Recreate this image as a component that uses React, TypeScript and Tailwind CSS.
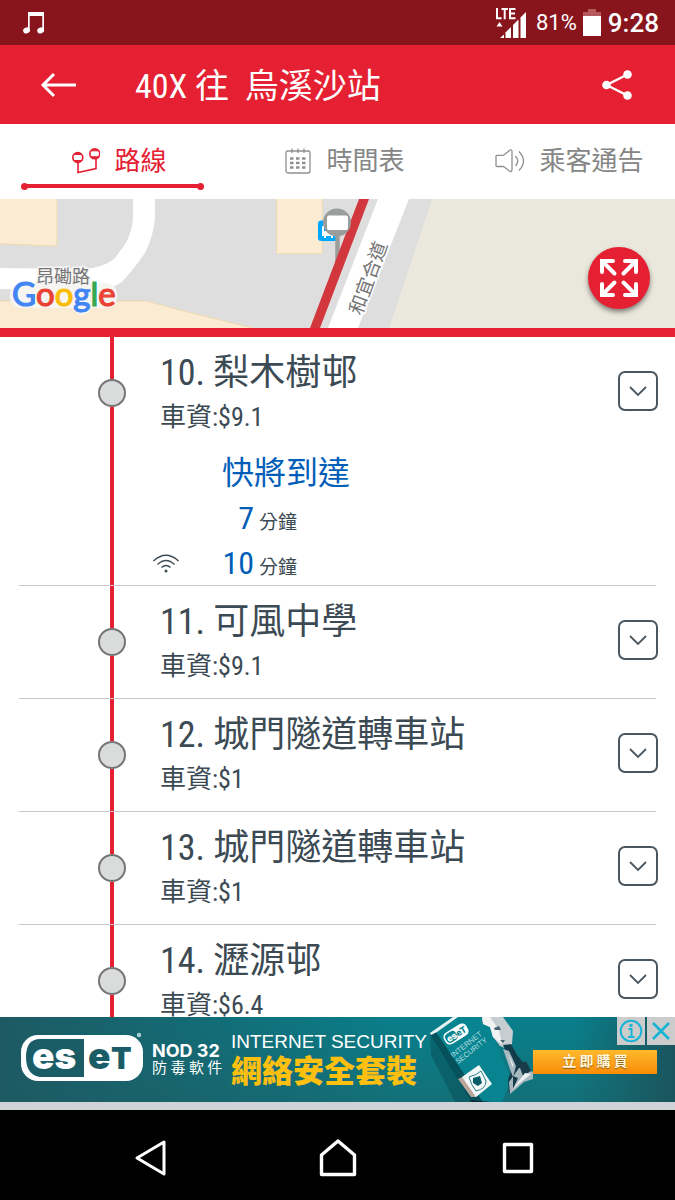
import React from "react";

type Arrival = { value: string; unit?: string; live?: boolean };
type Stop = { no: number; name: string; fare: string; arrivals?: Arrival[] };

const stops: Stop[] = [
  {
    no: 10,
    name: "梨木樹邨",
    fare: "$9.1",
    arrivals: [
      { value: "快將到達" },
      { value: "7", unit: "分鐘" },
      { value: "10", unit: "分鐘", live: true },
    ],
  },
  { no: 11, name: "可風中學", fare: "$9.1" },
  { no: 12, name: "城門隧道轉車站", fare: "$1" },
  { no: 13, name: "城門隧道轉車站", fare: "$1" },
  { no: 14, name: "瀝源邨", fare: "$6.4" },
];

function StatusBar() {
  return (
    <div className="flex h-[45px] shrink-0 items-center justify-between bg-[#88141c] pr-4 pl-[22px] font-['Roboto',sans-serif] text-white">
      <svg width="24" height="24" viewBox="0 0 24 24" aria-hidden="true" fill="#fff">
        <path d="M6 1.500Q6 1 6.500 1H21.500Q22 1 22 1.500V19H20.300V5H7.700V19H6Z" />
        <ellipse cx="4.600" cy="19.400" rx="3.500" ry="2.900" transform="rotate(-25 4.600 19.400)" />
        <ellipse cx="18.700" cy="19.400" rx="3.500" ry="2.900" transform="rotate(-25 18.700 19.400)" />
      </svg>
      <div className="flex items-center">
        <svg width="32" height="32" viewBox="0 0 32 32" className="mr-[9px]" aria-label="LTE">
          <g fill="none" stroke="#fff" strokeWidth="2">
            <path d="M2 1V11.200H6.500M6.500 2H13M9.700 2V12.200M20.500 2H15V11.200H20.500M15 6.500H20" />
          </g>
          <g fill="#fff">
            <path d="M4.500 15L7.500 19.500H1.500Z" />
            <path d="M5 31L9 27.500V31Z" />
            <path d="M10.500 31V25.500L16 20V31Z" />
            <path d="M18 31V18L23.500 12.500V31Z" />
            <path d="M25.500 31V10.500L31 5V31Z" />
          </g>
        </svg>
        <span className="mr-[6px] text-[22px] leading-[28px]">81%</span>
        <svg width="18" height="28" viewBox="0 0 18 28" className="mr-[7px]" aria-hidden="true">
          <path d="M5 0H13V3H18V8H0V3H5Z" fill="#b65a60" />
          <path d="M0 7H18V27H0Z" fill="#fff" />
        </svg>
        <span className="text-[26px] leading-[32px] font-medium">9:28</span>
      </div>
    </div>
  );
}

function Header() {
  return (
    <header className="flex h-[79px] shrink-0 items-center bg-[#e52032] pr-[42px] pl-[40px] text-white">
      <button type="button" aria-label="返回" className="mr-[58px]">
        <svg width="37" height="26" viewBox="0 0 37 26" fill="none" stroke="#fff" strokeWidth="3">
          <path d="M36 13H3M14 2L3 13L14 24" />
        </svg>
      </button>
      <h1 className="flex-1 pt-[2px] text-[34px] leading-[44px]">40X 往&nbsp; 烏溪沙站</h1>
      <button type="button" aria-label="分享">
        <svg width="32" height="32" viewBox="0 0 32 32" fill="#fff">
          <path d="M26.500 5.500L5.500 16L26.500 26.500" fill="none" stroke="#fff" strokeWidth="2.400" />
          <circle cx="5.500" cy="16" r="4.300" />
          <circle cx="26.500" cy="5.500" r="4.300" />
          <circle cx="26.500" cy="26.500" r="4.300" />
        </svg>
      </button>
    </header>
  );
}

function RouteIcon() {
  return (
    <svg width="28" height="28" viewBox="0 0 28 28" fill="none" stroke="#e52032" strokeWidth="1.600">
      <path d="M6 15V25.500L24 21.500V11" />
      <circle cx="5.800" cy="10.500" r="5" fill="#fff" />
      <circle cx="22.800" cy="6.800" r="5" fill="#fff" />
      <path d="M2.500 7.500Q6 4 9 7.500ZM2.500 13.500Q6 17 9 13.500ZM19.500 3.800Q23 0.500 26 3.800ZM19.500 9.800Q23 13 26 9.800Z" fill="#e52032" strokeWidth="1" />
    </svg>
  );
}

function CalendarIcon() {
  return (
    <svg width="28" height="28" viewBox="0 0 28 28" fill="none" stroke="#909090" strokeWidth="1.300">
      <rect x="2" y="4" width="24" height="22" rx="2" />
      <path d="M8 1.500V6M14 1.500V6M20 1.500V6" />
      <path d="M6 11.500H9.500M12 11.500H15.500M18 11.500H21.500M6 16H9.500M12 16H15.500M18 16H21.500M6 20.500H9.500M12 20.500H15.500M18 20.500H21.500" strokeWidth="2.600" />
    </svg>
  );
}

function SpeakerIcon() {
  return (
    <svg width="30" height="28" viewBox="0 0 30 28" fill="none" stroke="#909090" strokeWidth="1.300" strokeLinejoin="round">
      <path d="M1 9Q1 8.300 2 8.300H8.500L14.500 3.500Q17 2 17 4.500V22.500Q17 25.500 14.500 24L8.500 19.500H2Q1 19.500 1 18.800Z" />
      <path d="M20.500 9Q25 14 20.500 19M24 4.500Q33 14 24 23.500" />
    </svg>
  );
}

function Tabs() {
  const tabs = [
    { label: "路線", icon: <RouteIcon />, active: true },
    { label: "時間表", icon: <CalendarIcon />, active: false },
    { label: "乘客通告", icon: <SpeakerIcon />, active: false },
  ];
  return (
    <nav className="grid h-[75px] shrink-0 grid-cols-3 bg-white">
      {tabs.map((t) => (
        <button
          key={t.label}
          type="button"
          aria-current={t.active ? "page" : undefined}
          className={
            t.active
              ? "flex flex-col px-[21px] pt-4 text-[#e52032]"
              : "flex flex-col px-[21px] pt-4 text-[#868686]"
          }
        >
          <span className="flex h-[42px] w-full items-center justify-center gap-[14px] pl-[14px] text-[26px] leading-[36px] whitespace-nowrap">
            {t.icon}
            {t.label}
          </span>
          {t.active && (
            <span className="flex h-2 w-full items-center">
              <span className="size-[7px] rounded-full bg-[#e52032]" />
              <span className="-mx-px h-1 flex-1 bg-[#e52032]" />
              <span className="size-[7px] rounded-full bg-[#e52032]" />
            </span>
          )}
        </button>
      ))}
    </nav>
  );
}

function RouteMap() {
  return (
    <section className="relative shrink-0 border-b-[9px] border-[#e52032]">
      <svg className="block h-[129px] w-full bg-[#dedede]" viewBox="0 0 675 129" preserveAspectRatio="xMidYMid slice">
        <g fill="#faebd2" stroke="#ecd9b0">
          <path d="M-1 -1H57V47L32 46.500V46L10 45.500V45H-1Z" />
          <path d="M-1 102H147L180 111L255 129.500H-1Z" />
          <path d="M276.500 -1H322.500V54.500H276.500Z" />
        </g>
        <path d="M133 0H155V20Q153 38 145 54Q133 71 122 83Q110 91 92 92L0 90V69L85 70Q104 68 114 60Q122 50 127 42Q133 28 133 18Z" fill="#fff" />
        <path d="M378 0H409L358 129H328Z" fill="#fff" />
        <path d="M432 0H675V129H389Z" fill="#eae7dc" />
        <rect x="318" y="21.500" width="20" height="20.500" rx="3" fill="#00a9ff" />
        <path d="M322 28V37H324V39H326V37H331V39H333V37H336V25H324ZM324 28H334V32H324Z" fill="#fff" fillRule="evenodd" />
        <path d="M337.500 30V65" stroke="#9b9d9c" strokeWidth="4.500" />
        <path d="M359 0H369L320 129H310Z" fill="#d1373c" />
        <circle cx="337" cy="23.500" r="14" fill="#9b9d9c" />
        <rect x="327" y="16.500" width="21" height="14.500" rx="2" fill="#fff" />
        <rect x="10" y="84" width="107" height="25" rx="11" fill="#f6f5f2" />
        <circle cx="82" cy="107" r="9" fill="#f6f5f2" />
        <text x="63" y="84" textAnchor="middle" fontSize="18" fill="#747474" stroke="#f4f4f4" strokeWidth="3" paintOrder="stroke">昂磡路</text>
        <text transform="translate(368 79) rotate(-70)" x="0" y="7" textAnchor="middle" fontSize="19" fill="#747474" stroke="#fff" strokeWidth="3" paintOrder="stroke">和宜合道</text>
        <text x="12" y="107" fontFamily="Lato, sans-serif" fontSize="33" strokeWidth="1.200">
          <tspan fill="#4285f4" stroke="#4285f4">G</tspan>
          <tspan fill="#ea4335" stroke="#ea4335">o</tspan>
          <tspan fill="#fbbc05" stroke="#fbbc05">o</tspan>
          <tspan fill="#4285f4" stroke="#4285f4">g</tspan>
          <tspan fill="#34a853" stroke="#34a853">l</tspan>
          <tspan fill="#ea4335" stroke="#ea4335">e</tspan>
        </text>
      </svg>
      <button
        type="button"
        aria-label="全螢幕地圖"
        className="absolute top-12 right-[25px] flex size-[62px] items-center justify-center rounded-full bg-[#e52032] shadow-[0_3px_5px_rgba(0,0,0,0.45)]"
      >
        <svg width="40" height="40" viewBox="0 0 40 40" fill="none" stroke="#fff" strokeWidth="4" strokeLinecap="round">
          <path d="M3 14V3H14M4 4L15.500 15.500M26 3H37V14M36 4L24.500 15.500M3 26V37H14M4 36L15.500 24.500M26 37H37V26M36 36L24.500 24.500" />
        </svg>
      </button>
    </section>
  );
}

function StopRow({ stop }: { stop: Stop }) {
  return (
    <li className="mx-[19px] flex border-b border-[#c4c6c8] pl-[79px]">
      <div className="mr-[34px] flex w-7 shrink-0 flex-col items-center">
        <span className="h-[42px] w-[4px] bg-[#e52032]" />
        <span className="size-7 rounded-full border-2 border-[#757575] bg-[#dadcdb]" />
        <span className="w-[4px] flex-1 bg-[#e52032]" />
      </div>
      <div className="min-w-0 flex-1">
        <div className="pt-[14px] pb-[10px]">
          <h2 className="text-[36px] leading-[44px]">
            {stop.no}. {stop.name}
          </h2>
          <p className="text-[26px] leading-[44px]">車資:{stop.fare}</p>
        </div>
        {stop.arrivals && (
          <ul className="-mb-px -ml-2 pt-[2px]">
            {stop.arrivals.map((a) => (
              <li key={a.value} className="flex h-[45px] items-center">
                <span className="w-7">
                  {a.live && (
                    <svg width="28" height="22" viewBox="0 0 28 22" fill="none" stroke="#3c4a54" strokeWidth="1.400">
                      <path d="M1.500 8Q14 -3.500 26.500 8M5.500 11.500Q14 3.500 22.500 11.500M9.500 14.500Q14 10.500 18.500 14.500" />
                      <circle cx="14" cy="18" r="1.500" fill="#3c4a54" stroke="none" />
                    </svg>
                  )}
                </span>
                {a.unit ? (
                  <span className="flex items-baseline gap-[5px]">
                    <span className="w-[74px] text-right text-[32px] leading-[45px] text-[#005eb8]">{a.value}</span>
                    <span className="text-[19px]">{a.unit}</span>
                  </span>
                ) : (
                  <span className="pl-[42px] text-[32px] leading-[45px] text-[#005eb8]">{a.value}</span>
                )}
              </li>
            ))}
          </ul>
        )}
      </div>
      <button
        type="button"
        aria-label={`展開 ${stop.name}`}
        className="mt-[34px] -mr-[2px] flex size-10 shrink-0 items-center justify-center rounded-[7px] border-2 border-[#4a5761]"
      >
        <svg width="18" height="12" viewBox="0 0 18 12" fill="none" stroke="#4a5761" strokeWidth="1.800">
          <path d="M1 2L9 10L17 2" />
        </svg>
      </button>
    </li>
  );
}

function EsetLogo() {
  return (
    <svg width="124" height="50" viewBox="0 0 124 50" className="shrink-0" aria-label="ESET">
      <rect x="1" y="3" width="122" height="46" rx="17" fill="#fff" />
      <path d="M64 7H20Q6 7 6 25T20 45H64Z" fill="#1b5d66" />
      <text x="12" y="37" fontFamily="Inter, sans-serif" fontWeight="900" fontSize="37" fill="#fff">es</text>
      <text x="68" y="37" fontFamily="Inter, sans-serif" fontWeight="900" fontSize="37" fill="#1b5d66">e</text>
      <text x="91" y="37" fontFamily="Inter, sans-serif" fontWeight="900" fontSize="30" fill="#1b5d66">T</text>
      <circle cx="119" cy="3" r="2.200" fill="#a8ced1" />
    </svg>
  );
}

function AdArt() {
  return (
    <svg width="108" height="85" viewBox="0 0 108 85" className="shrink-0" aria-hidden="true">
      <path d="M5 17L46 85H30L6 38Z" fill="#06434b" opacity="0.400" />
      <path d="M5 17L28 0H60L86 62L77 85H50Z" fill="#078490" />
      <path d="M5 17L11 15L58 85H46Z" fill="#05525d" />
      <path d="M5 16L28 0H33L12 15L6 18Z" fill="#e7f2f2" />
      <g transform="translate(31 17) rotate(-32)">
        <rect x="-13" y="-6.500" width="26" height="13" rx="5" fill="#fff" />
        <rect x="-11.500" y="-5" width="12" height="10" rx="4" fill="#078490" />
        <text x="-10.500" y="3.500" fontFamily="Inter, sans-serif" fontSize="9" fontWeight="800" fill="#fff">es</text>
        <text x="0.500" y="3.500" fontFamily="Inter, sans-serif" fontSize="9" fontWeight="800" fill="#078490">eT</text>
      </g>
      <g transform="translate(28 41) rotate(-38)" fill="#b6dfe1" fontFamily="'Liberation Sans', sans-serif" fontSize="7.500">
        <text x="0" y="0">INTERNET</text>
        <text x="0" y="8">SECURITY</text>
      </g>
      <path d="M33 62L38 60L52 80L46 80Z" fill="#b9a79a" />
      <path d="M37 60L54 48L67 67L51 80Z" fill="#f5f8f8" />
      <path d="M44 60Q52 58 56 54L61 64Q61 72 51 74Q46 68 44 60Z" fill="none" stroke="#2b8088" />
      <path d="M48 61L55 59L57 66L53 69L48 66Z" fill="#075e6a" />
      <path d="M57 0H78L88 14L87 27L82 32L75 29L68 20L65 10L58 7Z" fill="#c6ced2" />
      <path d="M57 0H65L74 13L77 27L68 20L65 10L58 7Z" fill="#f2f4f4" />
      <path d="M69 11L74 9L76 13L70 13ZM75 23L80 23L78 26Z" fill="#4b6570" />
      <path d="M78 28L86 27L92 38L102 50L104 56L95 64L86 73L84 77L83 62L88 50Z" fill="#123c49" />
      <path d="M78 32L84 34L91 49L88 60L86 55ZM84 65L94 51L100 52L108 55V62L99 65L91 72L85 77Z" fill="#a7b9bf" />
      <path d="M94 48L101 44L106 54L98 59ZM88 59L93 61L88 72Z" fill="#183c49" />
      <path d="M100 56L106 57L96 65L87 73ZM83 37L88 47L88 51Z" fill="#f0f3f3" />
      <path d="M44 83L66 85H47Z" fill="#082834" />
    </svg>
  );
}

function AdBanner() {
  return (
    <aside className="relative shrink-0 border-b-8 border-[#cfd2d6] bg-[#cfd2d6]">
      <a
        href="#eset"
        className="flex h-[85px] items-center overflow-hidden bg-[linear-gradient(90deg,#1d5a63_0%,#1d5a6399_25%,#0b768100_60%,#0b768100_85%,#1a555d_100%),linear-gradient(180deg,#08808c,#137078)] pl-5"
      >
        <span className="-mt-[6px]">
          <EsetLogo />
        </span>
        <span className="ml-[8px] flex w-[79px] shrink-0 flex-col whitespace-nowrap text-white">
          <span className="font-['Inter',sans-serif] text-[18px] leading-[17px] font-bold">NOD 32</span>
          <span className="text-[15px] leading-[18px]">防 毒 軟 件</span>
        </span>
        <span className="flex w-[194px] shrink-0 flex-col whitespace-nowrap">
          <span className="font-['Liberation_Sans',sans-serif] text-[19px] leading-[24px] text-white">INTERNET SECURITY</span>
          <span className="text-[31px] leading-[36px] font-black text-[#fdc010]">網絡安全套裝</span>
        </span>
        <span className="flex min-w-0 flex-1 items-center self-stretch">
          <AdArt />
          <span className="mt-1 mr-[18px] h-6 flex-1 bg-linear-to-b from-[#ffb92b] to-[#f98c03] text-center text-[14px] leading-[23px] font-bold whitespace-nowrap text-[#fff8dc] [text-shadow:0_1px_1px_#8b5b10]">
            立 即 購 買
          </span>
        </span>
      </a>
      <div className="absolute top-0 right-0 flex gap-[2px]">
        <button type="button" aria-label="廣告資訊" className="flex size-7 items-center justify-center bg-[#cccccc]">
          <svg width="24" height="24" viewBox="0 0 24 24" fill="none" stroke="#17b5d5" strokeWidth="2">
            <circle cx="12" cy="12" r="10.300" />
            <path d="M9.500 10H12.500V18M9 18H15.500" />
            <path d="M10.500 6.500H13.500" strokeWidth="3" />
          </svg>
        </button>
        <button type="button" aria-label="關閉廣告" className="flex size-7 items-center justify-center bg-[#cccccc]">
          <svg width="20" height="20" viewBox="0 0 20 20" fill="none" stroke="#17b5d5" strokeWidth="2.600">
            <path d="M2 2L18 18M18 2L2 18" />
          </svg>
        </button>
      </div>
    </aside>
  );
}

function SystemNav() {
  return (
    <div className="flex h-[90px] shrink-0 justify-center bg-black pt-[6px]">
      <button type="button" aria-label="上一頁" className="flex w-[180px] items-center justify-center pr-4">
        <svg width="34" height="38" viewBox="0 0 34 38" fill="none" stroke="#fff" strokeWidth="3" strokeLinejoin="round">
          <path d="M31 3V35L4 19Z" />
        </svg>
      </button>
      <button type="button" aria-label="主畫面" className="flex w-[180px] items-center justify-center">
        <svg width="40" height="40" viewBox="0 0 40 40" fill="none" stroke="#fff" strokeWidth="3.400" strokeLinejoin="round">
          <path d="M3.500 36.500V17L20 3L36.500 17V36.500Z" />
        </svg>
      </button>
      <button type="button" aria-label="最近使用" className="flex w-[180px] items-center justify-center">
        <svg width="32" height="32" viewBox="0 0 32 32" fill="none" stroke="#fff" strokeWidth="3.400" strokeLinejoin="round">
          <rect x="2.500" y="2.500" width="27" height="27" />
        </svg>
      </button>
    </div>
  );
}

export default function App() {
  return (
    <div className="flex h-dvh flex-col bg-white font-['Roboto_Condensed','Liberation_Sans_Narrow','Noto_Sans_CJK_TC',sans-serif] text-[#3c4a54]">
      <StatusBar />
      <Header />
      <Tabs />
      <RouteMap />
      <ol className="min-h-0 flex-1 overflow-y-auto [scrollbar-width:none]">
        {stops.map((s) => (
          <StopRow key={s.no} stop={s} />
        ))}
      </ol>
      <AdBanner />
      <SystemNav />
    </div>
  );
}
